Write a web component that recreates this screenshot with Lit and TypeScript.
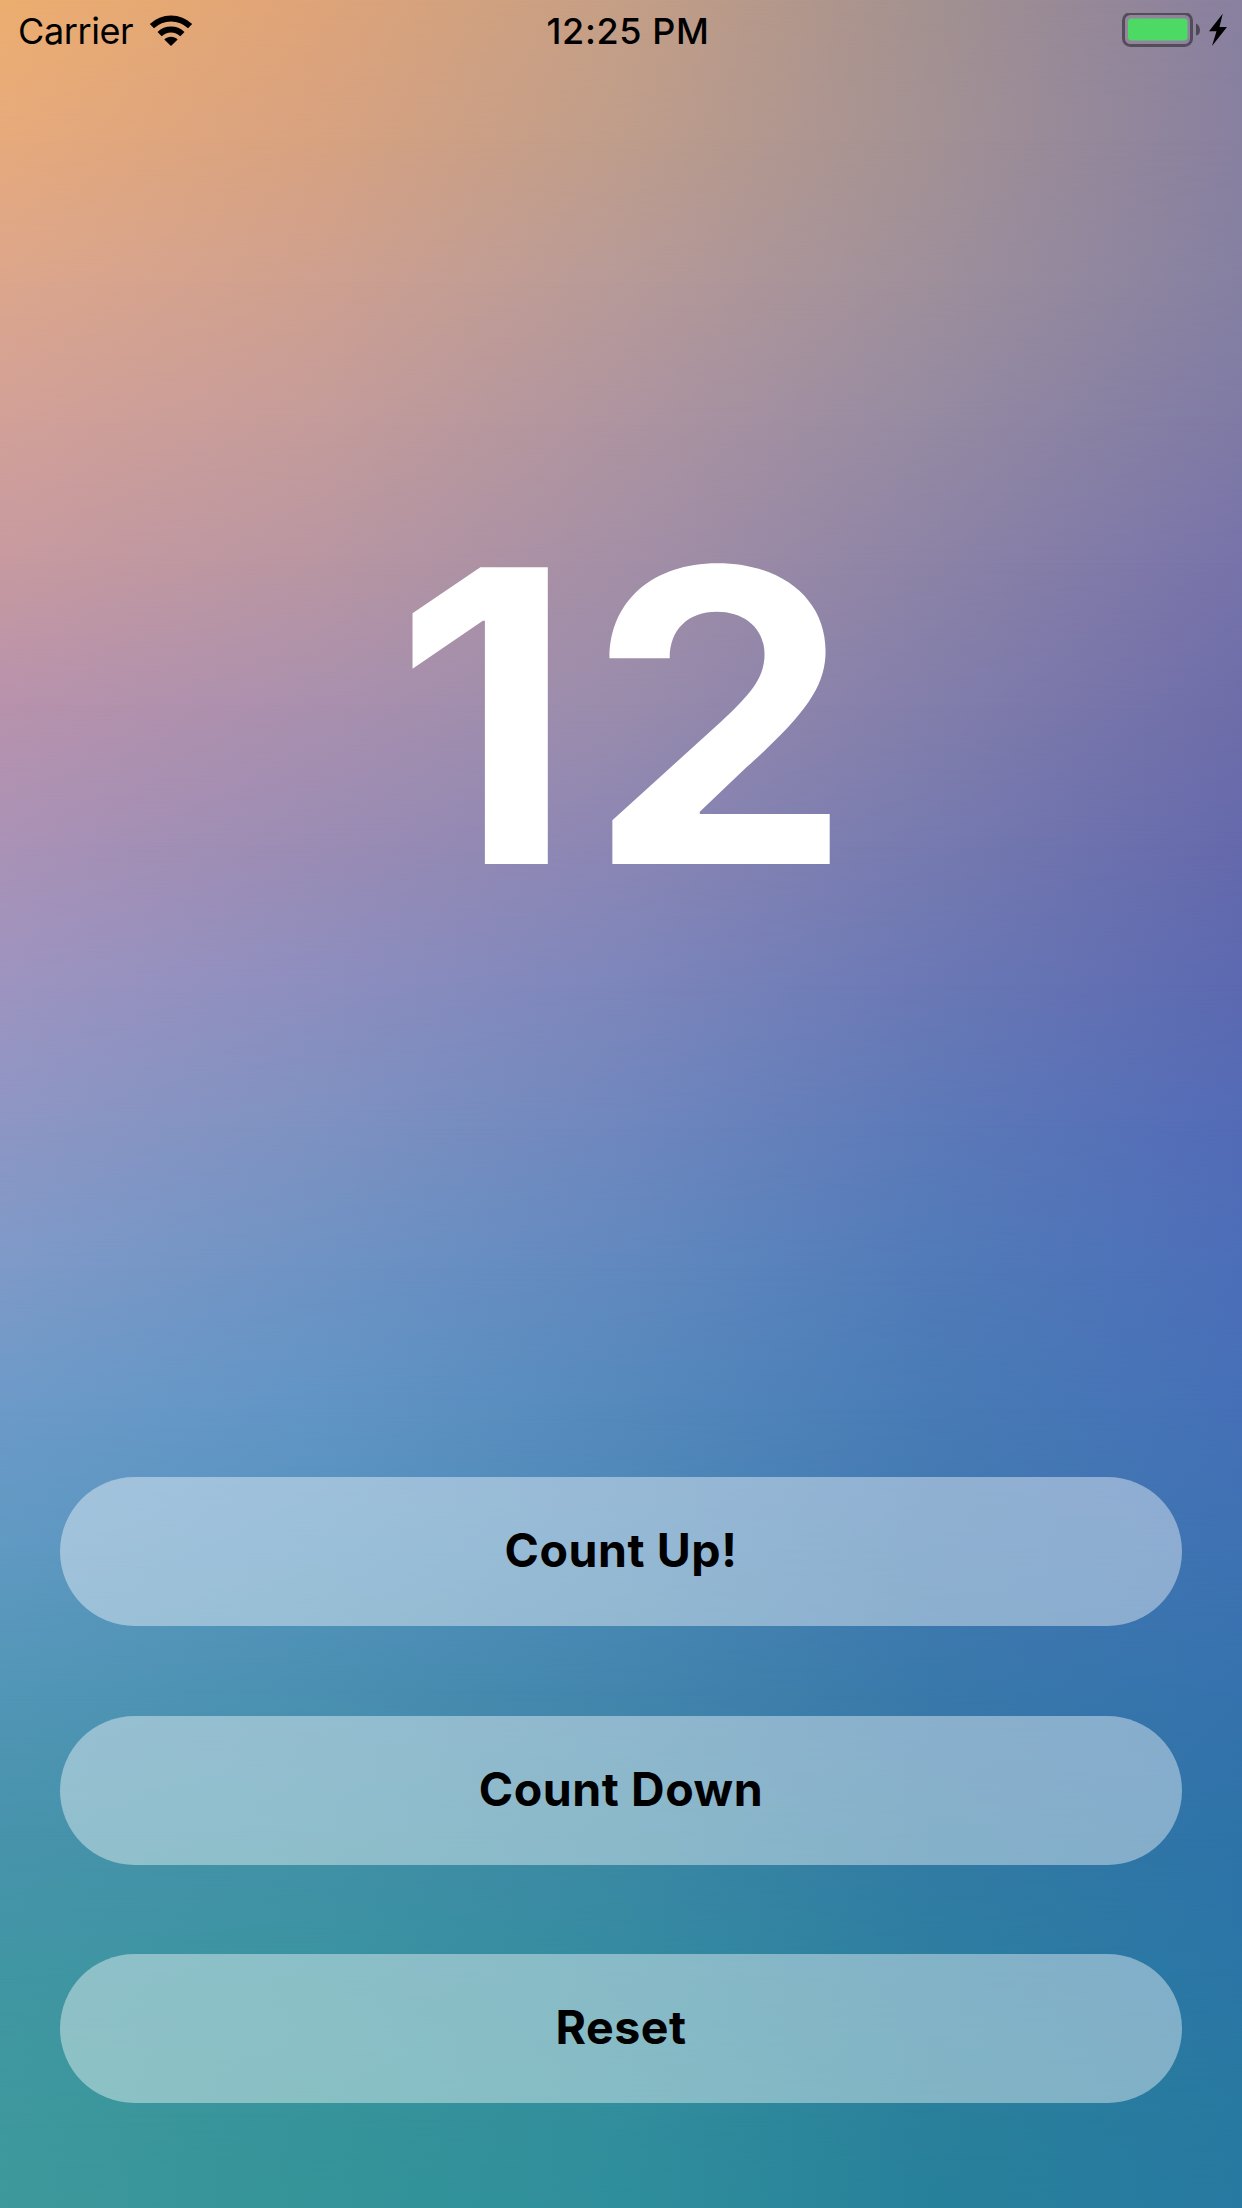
import { LitElement, html, css, svg } from "lit";
import { customElement, state } from "lit/decorators.js";
import { styleMap } from "lit/directives/style-map.js";

/** One row of the colour mesh: its height in percent and five evenly spaced colours. */
type MeshRow = [number, string[]];

const MESH: MeshRow[] = [
  [0, ["#edae70", "#dfa478", "#c59f86", "#a39190", "#8980a0"]],
  [6.4, ["#e6aa7c", "#d8a280", "#bf9d8b", "#a39194", "#8880a0"]],
  [12.8, ["#dca68c", "#cfa08f", "#b79a98", "#9e8f9b", "#8580a2"]],
  [19.1, ["#d2a098", "#c59c9a", "#ae94a0", "#958aa2", "#7f7aa5"]],
  [25.5, ["#c79aa0", "#b996a2", "#a48fa6", "#8c83a6", "#7773aa"]],
  [31.9, ["#b892ac", "#aa90ae", "#9a8cac", "#827eab", "#6e6da9"]],
  [38.3, ["#aa92b6", "#9b8cb4", "#8b86b4", "#767aaf", "#6569ac"]],
  [44.6, ["#9d94c0", "#8d8ebf", "#7d86bb", "#6a78b5", "#5c69b0"]],
  [51, ["#8d96c4", "#7e92c1", "#6f87be", "#5c79b8", "#536bb7"]],
  [57.4, ["#7e9ac8", "#6e93c4", "#6189bf", "#517bb8", "#4c6eb8"]],
  [63.8, ["#6c9ac8", "#6195c5", "#5589bc", "#487bb5", "#4570b7"]],
  [70.2, ["#6099c2", "#5593be", "#4b89b7", "#4079b0", "#3e72b2"]],
  [76.5, ["#5296b6", "#4b90b2", "#4385ad", "#3978aa", "#3672ae"]],
  [82.9, ["#4893ac", "#4291a8", "#3b88a5", "#327aa5", "#2e73a8"]],
  [89.3, ["#4196a3", "#3b93a0", "#358ba0", "#2d7ea0", "#2b75a6"]],
  [95.7, ["#3e989d", "#36949a", "#318e9c", "#29809b", "#2879a1"]],
  [100, ["#3e989b", "#349498", "#2f8e9b", "#27809a", "#2879a1"]],
];

@customElement("mesh-background")
export class MeshBackground extends LitElement {
  static styles = css`
    :host { display: grid; }
    .layer { grid-area: 1 / 1; }
  `;

  render() {
    // Each layer fades in from the previous row, so neighbouring rows blend linearly.
    return MESH.map(([pos, colors], i) => {
      const mask = i === 0 ? "none" : `linear-gradient(to bottom, transparent ${MESH[i - 1][0]}%, #000 ${pos}%)`;
      return html`<div class="layer" style=${styleMap({
        background: `linear-gradient(to right, ${colors.join(", ")})`,
        "mask-image": mask,
      })}></div>`;
    });
  }
}

@customElement("status-bar")
export class StatusBar extends LitElement {
  static styles = css`
    :host {
      display: grid;
      grid-template-columns: 1fr auto 1fr;
      align-items: center;
      height: 60px;
      padding: 0 13px 0 18px;
      box-sizing: border-box;
      color: #000;
      font-size: 36px;
      line-height: 60px;
    }
    .left { display: flex; align-items: center; gap: 16px; }
    .carrier { letter-spacing: -0.4px; padding-top: 1px; }
    .time { font-weight: 500; letter-spacing: 0.6px; padding: 1px 0 0 9px; }
    .right { display: flex; align-items: center; justify-content: flex-end; }
    svg { display: block; }
  `;

  render() {
    return html`
      <div class="left">
        <span class="carrier">Carrier</span>
        <svg width="44" height="34" viewBox="0 0 44 34">
          <path d="M22 32L15.300 25.400C19.100 22 24.900 22 28.700 25.400Z" />
          <path d="M10.600 20.200C17 14 27 14 33.400 20.200" fill="none" stroke="#000" stroke-width="6" />
          <path d="M2.900 12.200C13.600 1.900 30.400 1.900 41.100 12.200" fill="none" stroke="#000" stroke-width="6" />
        </svg>
      </div>
      <span class="time">12:25 PM</span>
      <div class="right">
        <svg width="108" height="36" viewBox="1121 12 108 36">
          ${svg`
            <rect x="1123.500" y="12.500" width="68" height="32" rx="7" fill="none" stroke="#000" stroke-opacity=".42" stroke-width="3"/>
            <rect x="1128" y="17.500" width="59.500" height="22" rx="3.500" fill="#4cd964"/>
            <path d="M1196 22.500C1201.300 24.500 1201.300 34.500 1196 34.500Z" fill-opacity=".45"/>
            <path d="M1222.700 12.800L1209 30.200H1216.500L1212 45L1227 26H1219.500Z"/>
          `}
        </svg>
      </div>
    `;
  }
}

@customElement("app-root")
export class AppRoot extends LitElement {
  static styles = css`
    :host {
      display: grid;
      width: 100%;
      height: 100vh;
      overflow: hidden;
      font-family: Inter, "Liberation Sans", sans-serif;
    }
    .backdrop, .screen { grid-area: 1 / 1; min-width: 0; min-height: 0; }
    .screen {
      display: flex;
      flex-direction: column;
      isolation: isolate;
    }
    .counter {
      flex: 1;
      padding: 450px 0 0 15px;
      color: #fff;
      font-size: 408px;
      font-weight: 700;
      letter-spacing: 11px;
      line-height: 412px;
      text-align: center;
      box-sizing: border-box;
      transform: scaleX(1.035);
    }
    .actions {
      display: flex;
      flex-direction: column;
      gap: 89.500px;
      padding: 0 60px 105px;
    }
    .action {
      height: 149px;
      border: 0;
      border-radius: 74.500px;
      padding: 0 0 2px;
      background: rgba(255, 255, 255, 0.41);
      color: #000;
      font: 700 46.500px / 147px Inter, "Liberation Sans", sans-serif;
      letter-spacing: 0.55px;
    }
  `;

  @state() private count = 12;

  render() {
    return html`
      <mesh-background class="backdrop"></mesh-background>
      <main class="screen">
        <status-bar></status-bar>
        <div class="counter">${this.count}</div>
        <div class="actions">
          <button class="action" @click=${() => this.count++}>Count Up!</button>
          <button class="action" @click=${() => this.count--}>Count Down</button>
          <button class="action" @click=${() => (this.count = 0)}>Reset</button>
        </div>
      </main>
    `;
  }
}
